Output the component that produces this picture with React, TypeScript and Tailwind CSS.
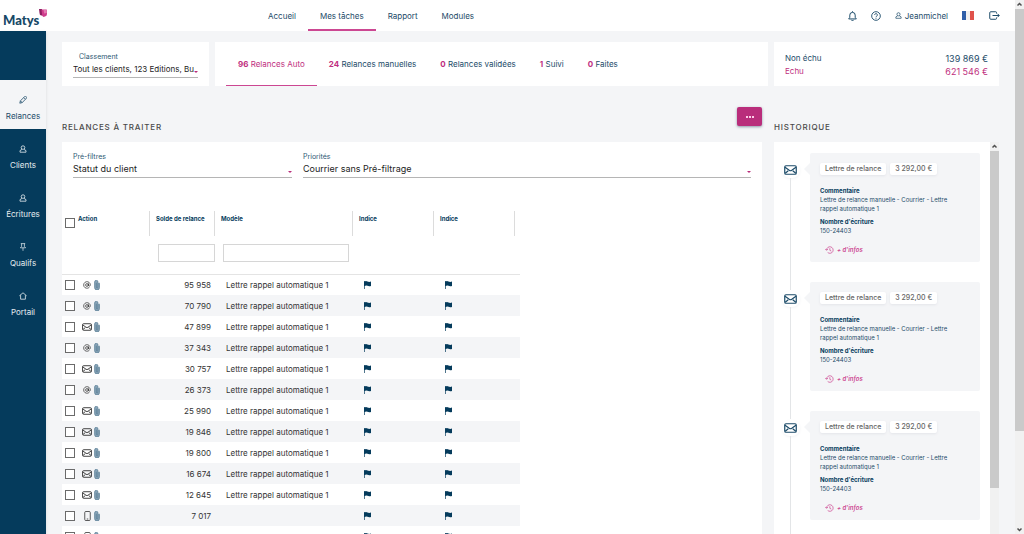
import React, { useState } from "react";
import clsx from "clsx";

type Channel = "email" | "letter" | "phone";

interface Relance {
  id: number;
  channel: Channel;
  amount: string;
  model: string;
}

interface IconProps {
  className?: string;
}

const MODEL = "Lettre rappel automatique 1";

const relances: Relance[] = [
  { id: 1, channel: "email", amount: "95 958", model: MODEL },
  { id: 2, channel: "email", amount: "70 790", model: MODEL },
  { id: 3, channel: "letter", amount: "47 899", model: MODEL },
  { id: 4, channel: "email", amount: "37 343", model: MODEL },
  { id: 5, channel: "letter", amount: "30 757", model: MODEL },
  { id: 6, channel: "email", amount: "26 373", model: MODEL },
  { id: 7, channel: "letter", amount: "25 990", model: MODEL },
  { id: 8, channel: "letter", amount: "19 846", model: MODEL },
  { id: 9, channel: "letter", amount: "19 800", model: MODEL },
  { id: 10, channel: "letter", amount: "16 674", model: MODEL },
  { id: 11, channel: "letter", amount: "12 645", model: MODEL },
  { id: 12, channel: "phone", amount: "7 017", model: "" },
  { id: 13, channel: "phone", amount: "", model: "" },
];

const menu = ["Accueil", "Mes tâches", "Rapport", "Modules"];

const tabs = [
  { count: 96, label: "Relances Auto" },
  { count: 24, label: "Relances manuelles" },
  { count: 0, label: "Relances validées" },
  { count: 1, label: "Suivi" },
  { count: 0, label: "Faites" },
];

const history = [1, 2, 3];

/* Icons */

const EnvelopeIcon: React.FC<IconProps> = ({ className }) => (
  <svg viewBox="0 0 26 20" className={className} fill="none" stroke="currentColor" strokeWidth="2.4">
    <rect x="1.5" y="1.5" width="23" height="17" rx="2.5" />
    <path d="M2 4.5l8.5 6.2q2.5 1.6 5 0L24 4.5M2.5 16.5l6-5M23.5 16.5l-6-5" />
  </svg>
);

const PhoneIcon: React.FC<IconProps> = ({ className }) => (
  <svg viewBox="0 0 14 20" className={className} fill="none" stroke="currentColor" strokeWidth="1.6">
    <rect x="1.5" y="1" width="11" height="18" rx="2" />
    <path d="M5.5 16h3" />
  </svg>
);

const AtIcon: React.FC<IconProps> = ({ className }) => (
  <svg viewBox="0 0 24 24" className={className} fill="none" stroke="currentColor" strokeWidth="2.2" strokeLinecap="round">
    <circle cx="12" cy="12" r="4.2" />
    <path d="M16.2 8v5a3 3 0 0 0 5.8 0v-1a10 10 0 1 0-4 8" />
  </svg>
);

const ClipIcon: React.FC<IconProps> = ({ className }) => (
  <svg viewBox="0 0 12 20" className={className} fill="none">
    <path d="M1 6V4a3.500 3.500 0 0 1 7 0v1.500a3 3 0 0 1 3 3V15a4.800 4.800 0 0 1-10 0z" fill="#8aa5b8" />
    <path d="M8 8V4a3.200 3.200 0 0 0-6.800 0v11a4.900 4.900 0 0 0 9.800 0V5.500M4.600 5.500v9a1.600 1.600 0 0 0 3.200 0V8" stroke="#4a728c" strokeWidth="1.200" />
  </svg>
);

const FlagIcon: React.FC<IconProps> = ({ className }) => (
  <svg viewBox="0 0 14 16" className={className} fill="currentColor">
    <path d="M0 0h1.4v16H0zM1.4.8Q4-.4 7 1t7 .2v8.600q-4 1-7-.2t-5.600.2z" />
  </svg>
);

const UserIcon: React.FC<IconProps> = ({ className }) => (
  <svg viewBox="0 0 20 20" className={className} fill="none" stroke="currentColor" strokeWidth="2" strokeLinejoin="round">
    <circle cx="10" cy="6.500" r="4.500" />
    <path d="M7.500 11L2.500 14v4h15v-4l-5-3" />
  </svg>
);

const PencilIcon: React.FC<IconProps> = ({ className }) => (
  <svg viewBox="0 0 20 20" className={className} fill="none" stroke="currentColor" strokeWidth="2" strokeLinejoin="round">
    <path d="M2 18l1.500-6L14 1.800a2.500 2.500 0 0 1 4.200 4.200L8 16.500zM12 4l4 4M3.500 12L8 16.500" />
  </svg>
);

const PinIcon: React.FC<IconProps> = ({ className }) => (
  <svg viewBox="0 0 20 20" className={className} fill="none" stroke="currentColor" strokeWidth="1.800">
    <path d="M4.500 1.500h11M6.500 1.500v7l-3 3.500h13l-3-3.500v-7M10 12v7.500" />
  </svg>
);

const HomeIcon: React.FC<IconProps> = ({ className }) => (
  <svg viewBox="0 0 20 20" className={className} fill="none" stroke="currentColor" strokeWidth="2" strokeLinejoin="round">
    <path d="M1 9.500L10 2l9 7.500M4 8v10h12V8" />
  </svg>
);

const BellIcon: React.FC<IconProps> = ({ className }) => (
  <svg viewBox="0 0 20 22" className={className} fill="none" stroke="currentColor" strokeWidth="2.200" strokeLinejoin="round">
    <path d="M10 .500v2M4 9a6 6 0 0 1 12 0v5l2.500 3.500h-17L4 14zM7.500 19.500a2.600 2.600 0 0 0 5 0" />
  </svg>
);

const HelpIcon: React.FC<IconProps> = ({ className }) => (
  <svg viewBox="0 0 22 22" className={className} fill="none" stroke="currentColor" strokeWidth="2">
    <circle cx="11" cy="11" r="9.500" />
    <path d="M8 8.800a3 3 0 1 1 4.500 2.600Q11 12.200 11 13.500M11 15v2" />
  </svg>
);

const LogoutIcon: React.FC<IconProps> = ({ className }) => (
  <svg viewBox="0 0 22 18" className={className} fill="none" stroke="currentColor" strokeWidth="2">
    <path d="M15 5V3a1.500 1.500 0 0 0-1.500-1.500h-10A2 2 0 0 0 1.500 3.500v11a2 2 0 0 0 2 2h10A1.500 1.500 0 0 0 15 15v-2M7 9h13M17 5.500L20.500 9 17 12.500" />
  </svg>
);

const FrenchFlag: React.FC<IconProps> = ({ className }) => (
  <svg viewBox="0 0 12 9" className={className}>
    <path fill="#2f5ea8" d="M0 0h4v9H0z" />
    <path fill="#efefef" d="M4 0h4v9H4z" />
    <path fill="#e0524b" d="M8 0h4v9H8z" />
  </svg>
);

const HistoryIcon: React.FC<IconProps> = ({ className }) => (
  <svg viewBox="0 0 24 22" className={className} fill="none" stroke="currentColor" strokeWidth="2">
    <path d="M4 11a9 9 0 1 1 3 6.800M0 8l4 4 4-4M13 6v6l4 2" />
  </svg>
);

const LogoMark: React.FC<IconProps> = ({ className }) => (
  <svg viewBox="0 0 16 16" className={className}>
    <path d="M0 0h6l1 8 4 4-3 1H4q-3-1-3-5z" fill="#8f1f62" />
    <path d="M5 1h10.500l.500 9q0 4-4 5l-3 1q-3-1-3-6z" fill="#cf3d8c" />
    <path d="M9 2h6l.500 6-5 1z" fill="#e47bb2" />
  </svg>
);

const sidebar = [
  { label: "Relances", Icon: PencilIcon },
  { label: "Clients", Icon: UserIcon },
  { label: "Écritures", Icon: UserIcon },
  { label: "Qualifs", Icon: PinIcon },
  { label: "Portail", Icon: HomeIcon },
];

const ChannelIcon = ({ channel }: { channel: Channel }) => {
  if (channel === "email") return <AtIcon className="size-2" />;
  if (channel === "phone") return <PhoneIcon className="h-[10px] w-[7px]" />;
  return <EnvelopeIcon className="h-2 w-[10px]" />;
};

const ScrollArrow = ({ down = false }: { down?: boolean }) => (
  <svg viewBox="0 0 9 9" className={clsx("size-[9px] shrink-0", down && "rotate-180")} fill="none" stroke="#505050" strokeWidth="1.500">
    <path d="M2.500 5.500l2-2 2 2" />
  </svg>
);

const Checkbox = ({ label }: { label: string }) => (
  <input
    type="checkbox"
    aria-label={label}
    className="block size-[10px] appearance-none border border-[#6b6b6b] bg-white checked:bg-[#b92d7b]"
  />
);

interface FilterSelectProps {
  id: string;
  label: string;
  value: string;
  labelClass?: string;
  selectClass?: string;
}

const FilterSelect: React.FC<FilterSelectProps> = ({ id, label, value, labelClass, selectClass = "text-[9px]" }) => (
  <div className="relative flex min-w-0 flex-col">
    <label htmlFor={id} className={clsx("text-[7px] leading-3 text-[#2d5873]", labelClass)}>
      {label}
    </label>
    <select
      id={id}
      className={clsx(
        "h-[15px] w-full appearance-none border-b border-[#b5b5b5] bg-transparent pb-[2px] leading-3 text-[#1d1d1d]",
        selectClass
      )}
    >
      <option>{value}</option>
    </select>
    <span className="pointer-events-none absolute right-0 bottom-[5px] border-x-2 border-t-2 border-x-transparent border-t-[#b92d7b]" />
  </div>
);

const HistoryCard = () => (
  <li className="flex">
    <div className="mr-[6px] flex w-[27px] shrink-0 flex-col items-center">
      <div className="mt-[9px] flex h-4 w-[18px] items-center justify-center rounded-full bg-white text-[#1c4b69] shadow-sm shadow-gray-100">
        <EnvelopeIcon className="h-[10px] w-[13px]" />
      </div>
      <div className="-mb-2 w-px flex-1 bg-[#e3e5e7]" />
    </div>
    <article className="relative mr-[10px] mb-5 h-[109px] min-w-0 flex-1 rounded-xs bg-[#f4f5f7] p-[10px] text-[#1c4b69]">
      <span className="absolute top-[10px] -left-[6px] border-y-[6px] border-r-[6px] border-y-transparent border-r-[#f4f5f7]" />
      <div className="flex gap-1 text-[7px] leading-3 font-medium text-[#666666]">
        <span className="rounded-xs bg-white px-[5px] shadow-sm shadow-gray-200">Lettre de relance</span>
        <span className="rounded-xs bg-white px-[5px] shadow-sm shadow-gray-200">3 292,00 €</span>
      </div>
      <h3 className="mt-[11px] text-[6px] leading-[9px] font-bold text-[#053b5c]">Commentaire</h3>
      <p className="text-[6px] leading-[9px]">
        Lettre de relance manuelle - Courrier - Lettre
        <br />
        rappel automatique 1
      </p>
      <h3 className="mt-1 text-[6px] leading-[9px] font-bold text-[#053b5c]">Nombre d'écriture</h3>
      <p className="text-[6px] leading-[9px]">150-24403</p>
      <button className="mt-[10px] ml-[5px] flex items-center gap-[3px] text-[6px] leading-[10px] font-semibold text-[#cc4792] italic">
        <HistoryIcon className="h-[8px] w-[9px]" />+ d'infos
      </button>
    </article>
  </li>
);

const App: React.FC = () => {
  const [activeMenu, setActiveMenu] = useState("Mes tâches");
  const [activeTab, setActiveTab] = useState("Relances Auto");

  return (
    <div className="flex h-screen overflow-hidden bg-[#f4f5f7] font-[Inter,'Open_Sans',sans-serif] text-[#1c4b69]">
      <div className="flex min-w-0 flex-1 flex-col">
        {/* Top bar */}
        <header className="flex h-[31px] shrink-0 items-stretch bg-white text-[8px]">
          <a href="#" className="flex w-[255px] items-start pt-[9px] pl-[3px]">
            <span className="font-[Lato,sans-serif] text-[13px] leading-[22px] font-black text-[#164866]">Matys</span>
            <LogoMark className="size-2" />
          </a>
          <nav className="flex">
            {menu.map((item) => (
              <a
                key={item}
                href="#"
                onClick={() => setActiveMenu(item)}
                className={clsx(
                  "flex items-center border-b-2 px-3 pt-[2px] first:pl-[13px]",
                  activeMenu === item ? "border-[#cc4792]" : "border-transparent"
                )}
              >
                {item}
              </a>
            ))}
          </nav>
          <div className="ml-auto flex items-center pr-[15px]">
            <button aria-label="Notifications" className="mr-[14px]">
              <BellIcon className="h-[10px] w-[9px]" />
            </button>
            <button aria-label="Aide" className="mr-[14px]">
              <HelpIcon className="size-[10px]" />
            </button>
            <button className="mr-[14px] flex items-center gap-[3px]">
              <UserIcon className="size-[7px]" />
              Jeanmichel
            </button>
            <button aria-label="Langue" className="mr-[15px]">
              <FrenchFlag className="h-[9px] w-3" />
            </button>
            <button aria-label="Déconnexion">
              <LogoutIcon className="h-[9px] w-[11px]" />
            </button>
          </div>
        </header>

        <div className="flex min-h-0 flex-1">
          {/* Sidebar */}
          <aside className="w-[46px] shrink-0 bg-[#053b5c] pt-[49px] shadow-sm">
            {sidebar.map(({ label, Icon }, index) => (
              <a
                key={label}
                href="#"
                className={clsx(
                  "flex h-[49px] flex-col items-center gap-[6px] pt-4 text-[8px] leading-3",
                  index === 0 ? "bg-[#f4f5f7]" : "text-[#e6ecf0]"
                )}
              >
                <Icon className="size-2" />
                {label}
              </a>
            ))}
          </aside>

          <main className="flex min-w-0 flex-1 flex-col px-4 pt-[11px]">
            {/* Summary cards */}
            <div className="grid h-11 shrink-0 grid-cols-[147px_minmax(0,1fr)_225px] gap-[6px]">
              <section className="bg-white px-[11px] pt-[9px]">
                <FilterSelect
                  id="classement"
                  label="Classement"
                  value="Tout les clients, 123 Editions, Bu"
                  labelClass="pl-[6px]"
                  selectClass="text-[8px]"
                />
              </section>
              <section className="flex bg-white pl-[11px] text-[8px]">
                {tabs.map((tab) => (
                  <button
                    key={tab.label}
                    onClick={() => setActiveTab(tab.label)}
                    className={clsx(
                      "border-b px-3",
                      activeTab === tab.label ? "border-[#cc4792] text-[#c02f80]" : "border-transparent"
                    )}
                  >
                    <span className="font-bold text-[#c02f80]">{tab.count}</span> {tab.label}
                  </button>
                ))}
              </section>
              <section className="flex flex-col justify-center bg-white px-[11px] pt-px leading-[13px]">
                <div className="flex justify-between">
                  <span className="text-[8px]">Non échu</span>
                  <span className="text-[9px]">139 869 €</span>
                </div>
                <div className="flex justify-between text-[#c02f80]">
                  <span className="text-[8px]">Echu</span>
                  <span className="text-[9px]">621 546 €</span>
                </div>
              </section>
            </div>

            <div className="flex min-h-0 flex-1 gap-3">
              {/* Relances */}
              <section className="flex min-w-0 flex-1 flex-col">
                <div className="flex h-14 shrink-0 justify-between">
                  <h2 className="self-end pb-[9px] text-[8px] leading-3 font-medium tracking-widest text-[#4a4a4a]">
                    RELANCES À TRAITER
                  </h2>
                  <button
                    aria-label="Plus d'actions"
                    className="mt-[21px] flex h-[19px] w-[25px] items-center justify-center gap-px rounded-xs bg-[#b92d7b] shadow-sm shadow-gray-400"
                  >
                    <span className="size-[2px] bg-pink-200" />
                    <span className="size-[2px] bg-pink-200" />
                    <span className="size-[2px] bg-pink-200" />
                  </button>
                </div>
                <div className="min-h-0 flex-1 overflow-hidden bg-white">
                  <div className="grid grid-cols-[219px_minmax(0,1fr)] gap-[11px] px-[11px] pt-[9px]">
                    <FilterSelect id="prefiltres" label="Pré-filtres" value="Statut du client" />
                    <FilterSelect id="priorites" label="Priorités" value="Courrier sans Pré-filtrage" />
                  </div>

                  <table className="mt-[33px] w-[458px] table-fixed border-collapse text-[8px] text-[#333333]">
                    <colgroup>
                      <col className="w-4" />
                      <col className="w-[72px]" />
                      <col className="w-[65px]" />
                      <col className="w-[138px]" />
                      <col className="w-[81px]" />
                      <col className="w-[86px]" />
                    </colgroup>
                    <thead className="text-left align-top text-[6px] leading-[8px] font-bold text-[#053b5c]">
                      <tr>
                        <th className="pt-[7px] pl-[3px]">
                          <Checkbox label="Tout sélectionner" />
                        </th>
                        <th>
                          <div className="h-[25px] border-r border-[#dcdcdc] pt-1">Action</div>
                        </th>
                        <th>
                          <div className="h-[25px] border-r border-[#dcdcdc] pt-1 pl-[6px]">Solde de relance</div>
                        </th>
                        <th>
                          <div className="h-[25px] border-r border-[#dcdcdc] pt-1 pl-[6px]">Modèle</div>
                        </th>
                        <th>
                          <div className="h-[25px] border-r border-[#dcdcdc] pt-1 pl-[6px]">Indice</div>
                        </th>
                        <th>
                          <div className="h-[25px] w-[81px] border-r border-[#dcdcdc] pt-1 pl-[6px]">Indice</div>
                        </th>
                      </tr>
                      <tr className="h-[38px] border-b border-[#e4e4e4]">
                        <td colSpan={2} />
                        <td className="pt-2 pl-2">
                          <input aria-label="Filtrer le solde" className="block h-[18px] w-full border border-[#d6d6d6]" />
                        </td>
                        <td className="pt-2 pr-1 pl-2">
                          <input aria-label="Filtrer le modèle" className="block h-[18px] w-full border border-[#d6d6d6]" />
                        </td>
                        <td colSpan={2} />
                      </tr>
                    </thead>
                    <tbody>
                      {relances.map((relance) => (
                        <tr key={relance.id} className="h-[21px] even:bg-[#f4f5f7]">
                          <td className="pl-[3px]">
                            <Checkbox label={`Sélectionner la relance ${relance.id}`} />
                          </td>
                          <td>
                            <div className="flex items-center gap-[2px] pl-1">
                              <span className="flex w-[10px] justify-center">
                                <ChannelIcon channel={relance.channel} />
                              </span>
                              <ClipIcon className="h-[10px] w-[6px]" />
                            </div>
                          </td>
                          <td className="pr-1 text-right">{relance.amount}</td>
                          <td className="pl-[11px]">{relance.model}</td>
                          <td className="pl-[11px] text-[#053b5c]">
                            <FlagIcon className="h-2 w-[7px]" />
                          </td>
                          <td className="pl-[11px] text-[#053b5c]">
                            <FlagIcon className="h-2 w-[7px]" />
                          </td>
                        </tr>
                      ))}
                    </tbody>
                  </table>
                </div>
              </section>

              {/* Historique */}
              <section className="flex w-[225px] shrink-0 flex-col">
                <h2 className="flex h-14 shrink-0 items-end pb-[9px] text-[8px] leading-3 font-medium tracking-widest text-[#4a4a4a]">
                  HISTORIQUE
                </h2>
                <div className="flex min-h-0 flex-1 overflow-hidden bg-white">
                  <ul className="min-w-0 flex-1 pt-[11px] pl-[3px]">
                    {history.map((entry) => (
                      <HistoryCard key={entry} />
                    ))}
                  </ul>
                  <div className="flex w-[9px] flex-col bg-[#f1f1f1]">
                    <ScrollArrow />
                    <div className="h-[337px] bg-[#cacaca]" />
                  </div>
                </div>
              </section>
            </div>
          </main>
        </div>
      </div>

      {/* Page scrollbar */}
      <div className="flex w-[9px] shrink-0 flex-col bg-[#f1f1f1]">
        <ScrollArrow />
        <div className="flex-[422] bg-[#cacaca]" />
        <div className="flex-[94]" />
        <ScrollArrow down />
      </div>
    </div>
  );
};

export default App;
